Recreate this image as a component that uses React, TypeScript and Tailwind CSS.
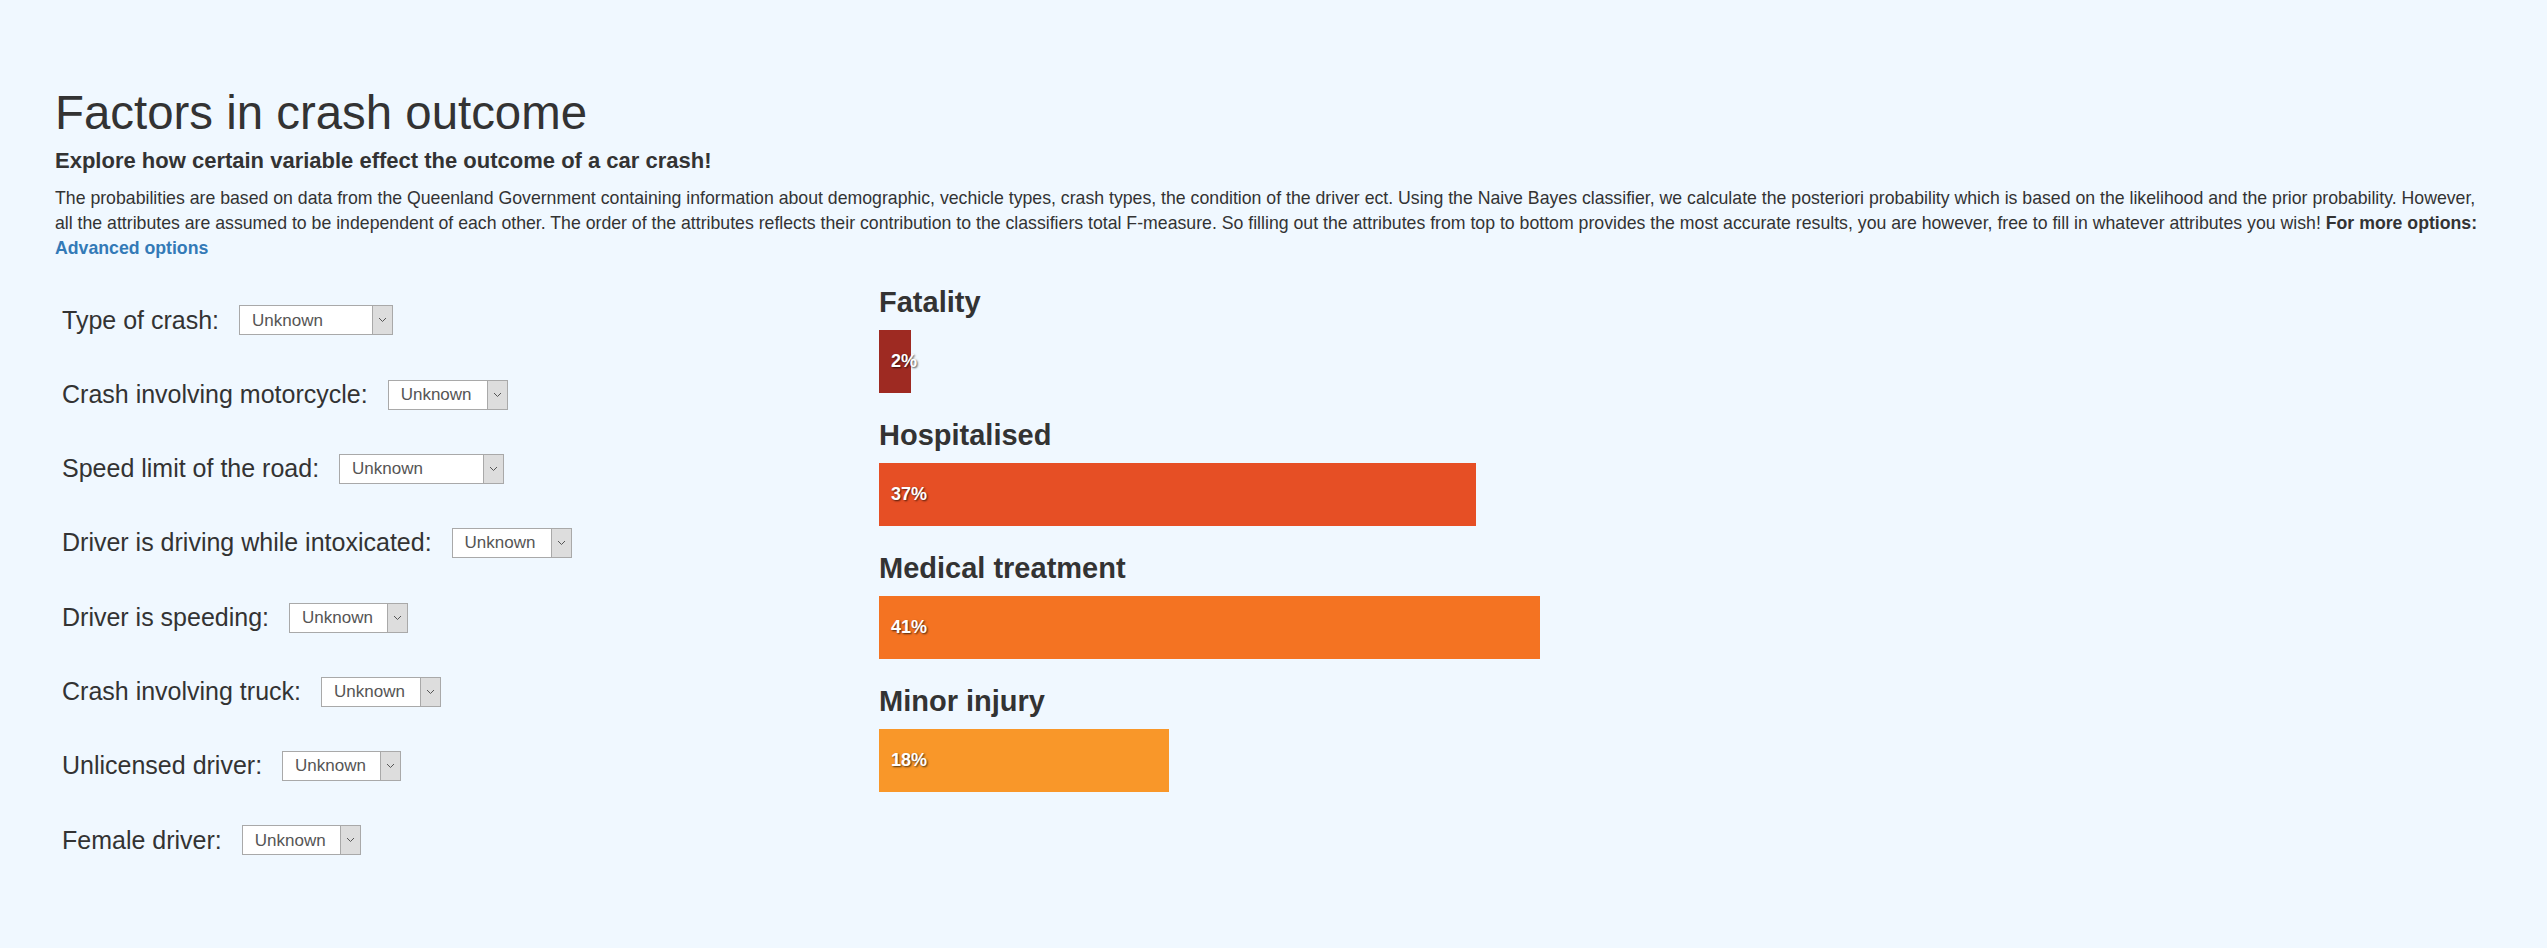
import React from "react";

const fields = [
  { label: "Type of crash:", width: "w-[154px]", options: ["Unknown", "Rear-end", "Head-on", "Angle", "Sideswipe", "Hit pedestrian", "Hit object", "Rollover"] },
  { label: "Crash involving motorcycle:", width: "w-[120px]", options: ["Unknown", "Yes", "No"] },
  { label: "Speed limit of the road:", width: "w-[165px]", options: ["Unknown", "0 - 50 km/h", "60 km/h", "70 km/h", "80 - 90 km/h", "100 - 110 km/h"] },
  { label: "Driver is driving while intoxicated:", width: "w-[120px]", options: ["Unknown", "Yes", "No"] },
  { label: "Driver is speeding:", width: "w-[119px]", options: ["Unknown", "Yes", "No"] },
  { label: "Crash involving truck:", width: "w-[120px]", options: ["Unknown", "Yes", "No"] },
  { label: "Unlicensed driver:", width: "w-[119px]", options: ["Unknown", "Yes", "No"] },
  { label: "Female driver:", width: "w-[119px]", options: ["Unknown", "Yes", "No"] },
];

const outcomes = [
  { name: "Fatality", pct: 2, color: "bg-[#9e2a22]" },
  { name: "Hospitalised", pct: 37, color: "bg-[#e64f25]" },
  { name: "Medical treatment", pct: 41, color: "bg-[#f47322]" },
  { name: "Minor injury", pct: 18, color: "bg-[#f99729]" },
];

const Select = ({ width, options }: { width: string; options: string[] }) => (
  <div className={`relative h-[30px] ${width} border border-[#a9a9a9] bg-white`}>
    <select className="h-full w-full appearance-none bg-transparent pl-[12px] pr-[22px] text-[17px] text-[#555] outline-none">
      {options.map((o) => (
        <option key={o}>{o}</option>
      ))}
    </select>
    {/* arrow box */}
    <span className="pointer-events-none absolute -top-px -right-px -bottom-px flex w-[21px] items-center justify-center border border-[#a9a9a9] bg-[#dddddd]">
      <svg width="9" height="6" viewBox="0 0 9 6" fill="none">
        <path d="M1 1l3.5 3.5L8 1" stroke="#555" strokeWidth="1" />
      </svg>
    </span>
  </div>
);

export default function App() {
  return (
    <div className="min-h-screen bg-[#f0f8ff] font-['Liberation_Sans',Arial,sans-serif] text-[#333]">
      <div className="px-[55px] pt-[87px] pb-10">
        {/* Header */}
        <h1 className="text-[47.4px] leading-[1.1]">Factors in crash outcome</h1>
        <h4 className="mt-[10px] text-[22px] leading-[1.1] font-bold">
          Explore how certain variable effect the outcome of a car crash!
        </h4>
        <p className="mt-[13px] text-[17.7px] leading-[25px]">
          The probabilities are based on data from the Queenland Government containing information about demographic,
          vechicle types, crash types, the condition of the driver ect. Using the Naive Bayes classifier, we calculate
          the posteriori probability which is based on the likelihood and the prior probability. However,
          <br />
          all the attributes are assumed to be independent of each other. The order of the attributes reflects their
          contribution to the classifiers total F-measure. So filling out the attributes from top to bottom provides the
          most accurate results, you are however, free to fill in whatever attributes you wish!{" "}
          <b>For more options:</b>
          <br />
          <a href="#" className="font-bold text-[#337ab7]">
            Advanced options
          </a>
        </p>

        {/* Main content */}
        <div className="mt-[25px] flex">
          {/* Attribute form */}
          <div className="flex w-[824px] shrink-0 flex-col gap-[44.3px] pt-[19px] pl-[7px]">
            {fields.map((f) => (
              <div key={f.label} className="flex h-[30px] items-center gap-[20px]">
                <label className="text-[25px] whitespace-nowrap">{f.label}</label>
                <Select width={f.width} options={f.options} />
              </div>
            ))}
          </div>

          {/* Outcome bars */}
          <div className="flex-1">
            {outcomes.map((o) => (
              <div key={o.name}>
                <h3 className="mb-[12px] text-[29px] leading-[32px] font-bold">{o.name}</h3>
                <div
                  className={`mb-[26px] flex h-[63px] items-center ${o.color} pl-[12px] text-[18px] font-bold whitespace-nowrap text-white [text-shadow:1px_1px_2px_rgba(0,0,0,0.7)]`}
                  style={{ width: `${o.pct}%` }}
                >
                  {o.pct}%
                </div>
              </div>
            ))}
          </div>
        </div>
      </div>
    </div>
  );
}
